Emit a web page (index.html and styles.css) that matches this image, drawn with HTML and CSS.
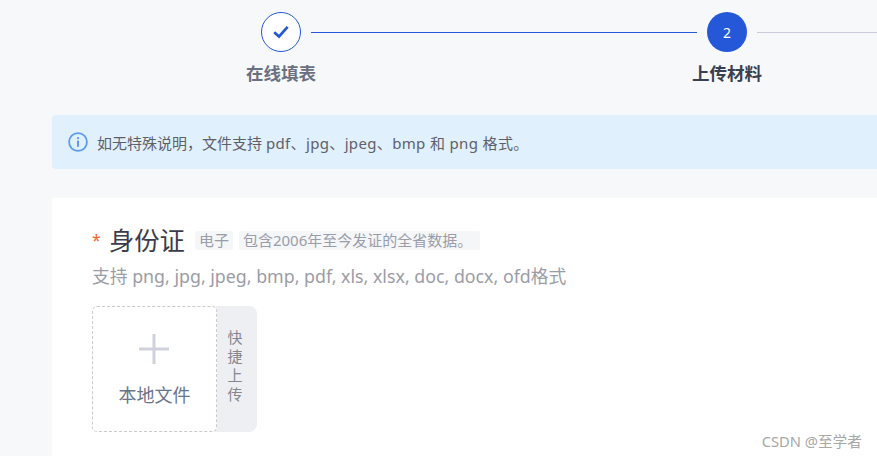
FILE: index.html
```html
<!DOCTYPE html>
<html lang="zh-CN">
<head>
<meta charset="utf-8">
<title>上传材料</title>
<link rel="stylesheet" href="styles.css">
</head>
<body>
<div class="page">
  <div class="track">
    <span class="circle done">
      <svg class="check" width="18" height="18" viewBox="0 0 18 18"><path d="M2.2 9.2 L7 13.6 L15.6 3.8" fill="none" stroke="#2458d8" stroke-width="2.8"/></svg>
    </span>
    <span class="line active"></span>
    <span class="circle current">2</span>
    <span class="line"></span>
  </div>
  <div class="labels">
    <span class="label muted">在线填表</span>
    <span class="label">上传材料</span>
  </div>
  <div class="alert">
    <svg class="info" width="20" height="20" viewBox="0 0 20 20"><circle cx="10" cy="10" r="8.9" fill="none" stroke="#5b9bf8" stroke-width="1.8"/><rect x="9" y="8.6" width="2" height="6.2" fill="#5b9bf8"/><rect x="9" y="5.2" width="2" height="1.9" fill="#5b9bf8"/></svg>
    <span>如无特殊说明，文件支持 <span class="latin">pdf、jpg、jpeg、bmp 和 png 格式。</span></span>
  </div>
  <div class="card">
    <div class="title-row">
      <span class="star">*</span>
      <span class="title">身份证</span>
      <span class="tag">电子</span>
      <span class="tag wide">包含2006年至今发证的全省数据。</span>
    </div>
    <div class="hint">支持 png, jpg, jpeg, bmp, pdf, xls, xlsx, doc, docx, ofd格式</div>
    <div class="uploader">
      <div class="local">
        <svg class="plus" width="32" height="32" viewBox="0 0 32 32"><rect x="14.5" y="1" width="3" height="30" fill="#cfd2dd"/><rect x="1" y="14.5" width="30" height="3" fill="#cfd2dd"/></svg>
        <span class="local-text">本地文件</span>
      </div>
      <div class="quick">快<br>捷<br>上<br>传</div>
    </div>
  </div>
</div>
<div class="watermark">CSDN @至学者</div>
</body>
</html>
```

FILE: styles.css
```css
html, body {
  margin: 0;
  height: 456px;
  overflow: hidden;
  background: #f7f8fa;
  font-family: "Noto Sans", "Noto Sans CJK SC", sans-serif;
}
.page {
  width: 877px;
  overflow: hidden;
  height: 456px;
  box-sizing: border-box;
  padding-top: 12px;
}
.track {
  display: flex;
  align-items: center;
  gap: 10px;
  padding-left: 261px;
  width: 1200px;
}
.circle {
  width: 40px;
  height: 40px;
  box-sizing: border-box;
  border-radius: 50%;
  flex: none;
  display: flex;
  align-items: center;
  justify-content: center;
  font-size: 14px;
}
.done {
  border: 1px solid #2458d8;
  background: #fff;
}
.current {
  background: #2458d8;
  color: #fff;
}
.line {
  width: 386px;
  height: 1px;
  background: #c9ccda;
  flex: none;
}
.line.active {
  background: #2458d8;
}
.labels {
  display: flex;
  padding-left: 58px;
  margin-top: 8px;
  width: 1000px;
}
.label {
  width: 446px;
  flex: none;
  text-align: center;
  font-size: 17.5px;
  line-height: 26px;
  font-weight: 700;
  color: #3a3f51;
}
.label.muted {
  color: #6b7080;
}
.alert {
  margin: 29px 0 29px 52px;
  height: 54px;
  width: 900px;
  box-sizing: border-box;
  padding-left: 16px;
  display: flex;
  align-items: center;
  gap: 9px;
  background: #e1f0fd;
  border-radius: 4px;
  font-size: 15px;
  color: #5e6069;
}
.latin {
  letter-spacing: 0.35px;
}
.info {
  flex: none;
}
.card {
  margin-left: 52px;
  width: 900px;
  height: 300px;
  box-sizing: border-box;
  background: #fff;
  padding: 24px 0 0 40px;
}
.title-row {
  display: flex;
  align-items: center;
  height: 36px;
}
.star {
  color: #f5622d;
  font-size: 16px;
  width: 17px;
}
.title {
  font-size: 25.3px;
  line-height: 36px;
  color: #3a3c4c;
  margin-right: 10px;
}
.tag {
  font-size: 15px;
  line-height: 19px;
  padding: 0 4px;
  color: #9a9da9;
  background: #f5f6f8;
  border-radius: 2px;
  margin-right: 6px;
}
.tag.wide {
  width: 241px;
  box-sizing: border-box;
  white-space: nowrap;
  padding: 0 4px;
}
.hint {
  font-size: 17.8px;
  line-height: 26px;
  margin-top: 5px;
  color: #9b9ca6;
}
.uploader {
  display: flex;
  width: 165px;
  height: 126px;
  margin-top: 17px;
  background: #eeeff3;
  border-radius: 8px;
}
.local {
  width: 125px;
  box-sizing: border-box;
  flex: none;
  background: #fff;
  border: 1px dashed #c9c9ce;
  border-radius: 5px;
  display: flex;
  flex-direction: column;
  align-items: center;
  padding-top: 26px;
}
.plus {
  flex: none;
  margin-right: 2px;
}
.local-text {
  font-size: 18px;
  line-height: 26px;
  margin-top: 17px;
  color: #6a7488;
}
.quick {
  flex: 1;
  text-align: center;
  font-size: 15px;
  line-height: 19px;
  color: #85868f;
  padding-top: 22px;
  padding-right: 4px;
}
.watermark {
  position: absolute;
  right: 15px;
  top: 431px;
  font-size: 14.7px;
  line-height: 20px;
  color: #a8a8a8;
}
```
